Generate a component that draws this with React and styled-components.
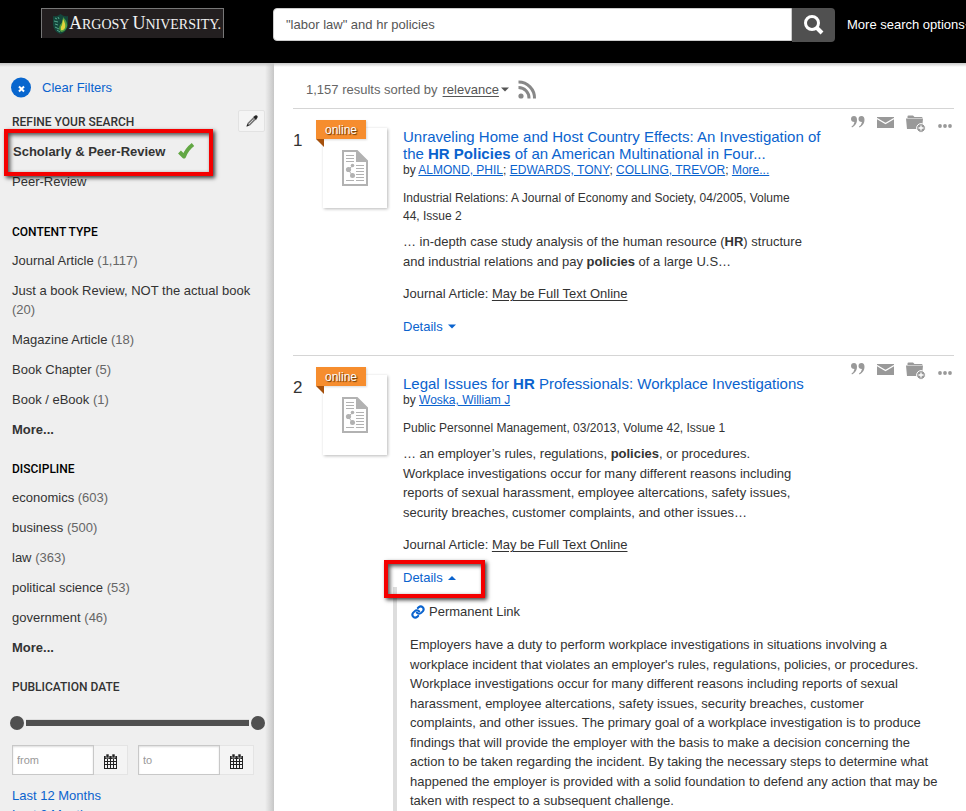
import React from 'react';
import styled, { createGlobalStyle, css } from 'styled-components';

const GlobalStyle = createGlobalStyle`
  * { box-sizing: border-box; }
  body {
    margin: 0;
    background: #fff;
    color: #333;
    font-family: "Liberation Sans", Arial, sans-serif;
    font-size: 13px;
    line-height: 19px;
  }
  button, input { font-family: inherit; }
  h1, h2, h3, p, ul, ol { margin: 0; padding: 0; font-weight: normal; }
  ul, ol { list-style: none; }
  svg { flex: none; }
`;

const BLUE = '#0a63ce';

const Page = styled.div`
  display: flex;
  flex-direction: column;
  height: 100vh;
  overflow: hidden;
`;

/* ---------- header ---------- */

const Header = styled.header`
  display: flex;
  align-items: flex-start;
  flex: none;
  padding: 8px 0 21px;
  background: #000;
  overflow: hidden;
`;

const LogoArea = styled.div`
  flex: none;
  width: 273px;
  padding-left: 41px;
`;

const Logo = styled.a`
  display: flex;
  align-items: center;
  width: 183px;
  height: 30px;
  padding-left: 10px;
  border: 1px solid #777;
  border-bottom: 0;
  background: #231f20;
  color: #f2f2f2;
  font: 14px/28px "Liberation Serif", "Times New Roman", serif;
  text-decoration: none;
  white-space: nowrap;
`;

const Initial = styled.span`
  font-size: 18px;
`;

const SearchForm = styled.form`
  display: flex;
  flex: 1;
  min-width: 0;
`;

const SearchInput = styled.input`
  flex: 1;
  min-width: 0;
  height: 33px;
  padding: 0 12px;
  border: 1px solid #ccc;
  border-radius: 4px 0 0 4px;
  background: #fff;
  color: #555;
  font-size: 13px;
`;

const SearchButton = styled.button`
  display: flex;
  align-items: center;
  justify-content: center;
  width: 43px;
  height: 34px;
  padding: 0;
  border: 0;
  border-radius: 0 4px 4px 0;
  background: #505050;
`;

const MoreOptions = styled.a`
  flex: none;
  width: 131px;
  padding-left: 12px;
  color: #fff;
  line-height: 33px;
  text-decoration: none;
  white-space: nowrap;
`;

/* ---------- sidebar ---------- */

const Columns = styled.div`
  display: flex;
  flex: 1;
  min-height: 0;
`;

const Sidebar = styled.aside`
  flex: none;
  width: 274px;
  padding: 14px 9px 0 12px;
  overflow: hidden;
  background:
    linear-gradient(to bottom, #c4c4c4, rgba(239, 239, 239, 0)) top / 100% 4px no-repeat,
    linear-gradient(to right, #efefef, #c6c6c6) right / 9px 100% no-repeat,
    #efefef;
`;

const ClearFilters = styled.button`
  display: flex;
  align-items: center;
  gap: 11px;
  height: 21px;
  margin: 0 0 15px -1px;
  padding: 0;
  border: 0;
  background: none;
  color: ${BLUE};
  font-size: 13px;
`;

const Facet = styled.section`
  margin-bottom: ${p => p.$gap || 21}px;
`;

const FacetHead = styled.div`
  display: flex;
  align-items: center;
  justify-content: space-between;
  height: 19px;
  margin-bottom: 9px;
`;

const FacetTitle = styled.h2`
  color: ${p => (p.$strong ? '#000' : '#333')};
  font: 500 12px/19px Roboto, "Liberation Sans", sans-serif;
`;

const EditButton = styled.button`
  display: flex;
  align-items: center;
  justify-content: center;
  width: 27px;
  height: 22px;
  margin-bottom: 3px;
  padding: 0;
  border: 1px solid #e2e2e2;
  border-radius: 2px;
  background: #f4f4f4;
`;

const FacetList = styled.ul`
  display: flex;
  flex-direction: column;
  gap: 11px;
`;

const FacetLink = styled.a`
  color: ${p => (p.$blue ? BLUE : '#333')};
  font-weight: ${p => (p.$bold ? 'bold' : 'normal')};
  text-decoration: none;
`;

const Count = styled.span`
  color: #666;
`;

const ActiveFacet = styled.li`
  position: relative;
  display: flex;
  align-items: center;
  gap: 12px;
  height: 20px;
  padding-left: 1px;
`;

/* Red annotation frame lying over the text it points out. */
const Callout = styled.span`
  position: absolute;
  inset: ${p => p.$inset};
  border: 4px solid #f40000;
  box-shadow: 2px 2px 4px rgba(0, 0, 0, 0.75), inset 2px 2px 4px rgba(0, 0, 0, 0.7);
  pointer-events: none;
`;

const Slider = styled.div`
  display: grid;
  align-items: center;
  height: 16px;
  margin: 18px 0 14px -2px;
`;

const SliderBar = styled.div`
  grid-area: 1 / 1;
  height: 6px;
  margin: 0 16px;
  background: #505050;
  box-shadow: 0 -1px #ddd;
`;

const thumb = css`
  appearance: none;
  width: 14px;
  height: 14px;
  border: 0;
  border-radius: 50%;
  background: #505050;
  box-shadow: 0 0 0 2px #efefef;
  pointer-events: auto;
`;

const SliderInput = styled.input`
  grid-area: 1 / 1;
  appearance: none;
  width: 100%;
  height: 16px;
  margin: 0;
  background: none;
  pointer-events: none;
  &::-webkit-slider-thumb { ${thumb} }
  &::-moz-range-thumb { ${thumb} }
`;

const DateRow = styled.div`
  display: flex;
  gap: 10px;
  margin-bottom: 11px;
`;

const DateField = styled.div`
  display: flex;
`;

const DateInput = styled.input`
  width: 82px;
  height: 30px;
  padding: 0 4px;
  border: 1px solid #c8c8c8;
  background: #fff;
  box-shadow: inset 0 1px 2px #ddd;
  font-size: 11px;
  &::placeholder { color: #999; }
`;

const DateButton = styled.button`
  display: flex;
  align-items: center;
  justify-content: center;
  width: 34px;
  height: 30px;
  padding: 3px 0 0;
  border: 1px solid #e4e4e4;
  border-left: 0;
  background: #f4f4f4;
`;

/* ---------- results ---------- */

const Main = styled.main`
  flex: 1;
  min-width: 0;
  padding: 16px 12px 0 19px;
  overflow: hidden;
  background: linear-gradient(to bottom, #c8c8c8, #fff) top / 100% 4px no-repeat, #fff;
`;

const SortRow = styled.div`
  display: flex;
  align-items: center;
  height: 21px;
  margin-bottom: 8px;
  padding-left: 13px;
  color: #666;
`;

const SortButton = styled.button`
  display: flex;
  align-items: center;
  gap: 2px;
  margin: 0 9px 0 5px;
  padding: 0;
  border: 0;
  background: none;
  color: #555;
  font-size: 13px;
  line-height: 19px;
`;

const Underlined = styled.span`
  text-decoration: underline;
  text-underline-offset: 2px;
`;

const Result = styled.li`
  display: grid;
  grid-template-columns: 30px 64px minmax(0, 1fr) auto;
  padding-bottom: 19px;
  border-top: 1px solid #d5d5d5;
`;

const Rank = styled.span`
  padding: 22px 0 0;
  font-size: 17px;
  line-height: 20px;
`;

const Thumb = styled.div`
  position: relative;
  display: flex;
  align-items: center;
  justify-content: center;
  height: 80px;
  margin-top: 19px;
  background: #fff;
  box-shadow: 1px 1px 3px rgba(0, 0, 0, 0.28);
`;

const Badge = styled.span`
  position: absolute;
  left: -7px;
  top: -8px;
  width: 50px;
  height: 19px;
  background: #f68d2e;
  color: #fff;
  font-size: 12px;
  line-height: 20px;
  text-align: center;
  text-shadow: 1px 1px 1px #5a3000;
  box-shadow: 1px 1px 2px rgba(0, 0, 0, 0.15);
  &::after {
    content: "";
    position: absolute;
    left: 0;
    top: 19px;
    border-top: 8px solid #a5500c;
    border-left: 8px solid transparent;
  }
`;

const Body = styled.div`
  padding: 19px 0 0 16px;
  white-space: nowrap;
`;

const Title = styled.h3`
  font-size: 15px;
  line-height: 17px;
`;

const TitleLink = styled.a`
  color: ${BLUE};
  text-decoration: none;
`;

const Byline = styled.p`
  margin-bottom: 10px;
  font-size: 12px;
  line-height: 17px;
`;

const Author = styled.a`
  color: ${BLUE};
  text-decoration: underline;
`;

const Source = styled.p`
  margin-bottom: 7px;
  font-size: 12px;
  line-height: 18px;
`;

const Snippet = styled.p`
  margin-bottom: 13px;
  line-height: 1.5;
`;

const Access = styled.p`
  margin-bottom: 14px;
`;

const AccessLink = styled.a`
  color: #333;
  text-underline-offset: 2px;
`;

const DetailsButton = styled.button`
  position: relative;
  display: flex;
  align-items: center;
  gap: 5px;
  padding: 0;
  border: 0;
  background: none;
  color: ${BLUE};
  font-size: 13px;
  line-height: 19px;
`;

const Actions = styled.div`
  display: flex;
  align-items: flex-start;
  gap: 12px;
  padding: 6px 2px 0 0;
`;

const ActionButton = styled.button`
  display: flex;
  padding: 0;
  border: 0;
  background: none;
  color: #999;
`;

const Panel = styled.div`
  grid-column: 3 / 5;
  margin-left: 6px;
  padding: 15px 0 8px 13px;
  border-left: 4px solid #ddd;
  white-space: nowrap;
`;

const PermanentLink = styled.a`
  display: flex;
  align-items: center;
  gap: 4px;
  margin-bottom: 14px;
  padding-left: 1px;
  color: #333;
  text-decoration: none;
`;

const Abstract = styled.p`
  line-height: 1.5;
`;

/* ---------- icons ---------- */

const Emblem = () => (
  <svg width="17" height="22" viewBox="0 0 17 22" aria-hidden="true">
    <path d="M1 3Q5 4 8.500 1Q12 4 16 3V12Q15 19 8.500 21Q2 19 1 12Z" fill="#14463b" />
    <path d="M3 5l2 1M2 8l4 1M3 11l3 1M3 14l4 2M6 4l1 2M5 17l3 2" stroke="#55a78c" strokeWidth="1" fill="none" />
    <path d="M11 4Q16 9 15 14Q13 19 9 19Q6 16 8 12Q11 9 11 4Z" fill="#4c9b43" />
    <path d="M11 6Q14 11 13 15Q11 18 9 17Q8 14 10 12Z" fill="#e2d43c" />
  </svg>
);

const SearchIcon = () => (
  <svg width="22" height="22" viewBox="0 0 22 22" aria-hidden="true">
    <circle cx="9" cy="9" r="6.500" fill="none" stroke="#fff" strokeWidth="3" />
    <path d="M13 13l6 6" stroke="#fff" strokeWidth="4" />
  </svg>
);

const ClearIcon = () => (
  <svg width="20" height="21" viewBox="0 0 20 21" aria-hidden="true">
    <circle cx="10" cy="10.500" r="10" fill="#0866ce" />
    <path d="M8 9.500l5 5M13 9.500l-5 5" stroke="#fff" strokeWidth="2" />
  </svg>
);

const PencilIcon = () => (
  <svg width="12" height="12" viewBox="0 0 12 12" aria-hidden="true">
    <path d="M0.500 11.500L1.500 8L7 2.500L9.500 5L4 10.500Z" fill="#777" />
    <path d="M7 2L8 1.500Q10 -0.500 11.500 1Q12 2.500 10.500 4L10 5.200Z" fill="#222" />
    <path d="M0.500 11.500L1.300 9L3 10.700Z" fill="#222" />
    <path d="M3 9L7.500 4.500" stroke="#ccc" />
  </svg>
);

const CheckIcon = () => (
  <svg width="19" height="18" viewBox="0 0 19 18" aria-hidden="true">
    <path d="M2.500 10L7 14.500Q10 7 16 2.500" fill="none" stroke="#62a744" strokeWidth="4" strokeLinejoin="round" />
  </svg>
);

const CalendarIcon = () => (
  <svg width="13" height="15" viewBox="0 0 13 15" aria-hidden="true">
    <path d="M0 2h13v13H0z" fill="#222" />
    <path d="M2 0h3v4H2zM8 0h3v4H8z" fill="#222" stroke="#f4f4f4" strokeWidth="0.600" />
    <path d="M1 5h2v2H1zM4 5h2v2H4zM7 5h2v2H7zM10 5h2v2h-2zM1 8h2v2H1zM4 8h2v2H4zM7 8h2v2H7zM10 8h2v2h-2zM1 11h2v3H1zM4 11h2v3H4zM7 11h2v3H7zM10 11h2v3h-2z" fill="#f4f4f4" />
  </svg>
);

const Caret = ({ up }) => (
  <svg width="8" height="5" viewBox="0 0 8 5" aria-hidden="true">
    <path d={up ? 'M0 5L4 1L8 5Z' : 'M0 0.500H8L4 4.500Z'} fill="currentColor" />
  </svg>
);

const RssIcon = () => (
  <svg width="19" height="19" viewBox="0 0 19 19" aria-label="RSS feed">
    <circle cx="3" cy="16" r="2.600" fill="#888" />
    <path d="M0.500 7.500A10.500 10.500 0 0 1 11 18.500M0.500 2A16 16 0 0 1 16.500 18.500" fill="none" stroke="#888" strokeWidth="3" />
  </svg>
);

const DocumentIcon = () => (
  <svg width="26" height="36" viewBox="0 0 26 36" aria-hidden="true">
    <path d="M1 1H15L25 11V35H1Z" fill="#fff" stroke="#b2b2b2" strokeWidth="2" />
    <path d="M14 0L26 12H14Z" fill="#b2b2b2" />
    <path d="M4 5.500h8M4 8.500h8M4 11.500h8M14 15.500h8M14 18.500h8M14 21.500h8M14 24.500h8M14 27.500h8M4 30.500h8M14 30.500h8" stroke="#b2b2b2" />
    <path d="M10.500 16L6 19.500L10.500 25.500" fill="none" stroke="#b2b2b2" />
    <circle cx="10.500" cy="15.500" r="1.800" fill="#b2b2b2" />
    <circle cx="6.500" cy="19.500" r="2.600" fill="#b2b2b2" />
    <circle cx="10.500" cy="25.500" r="2.500" fill="#b2b2b2" />
  </svg>
);

const QuoteIcon = () => (
  <svg width="14" height="18" viewBox="0 0 14 18" aria-hidden="true">
    <g fill="currentColor">
      <path d="M3 1Q6 1 6 5Q6 10 1 12.500L0.500 11.500Q3 10 3.500 7Q0 7 0 4Q0 1 3 1Z" />
      <path d="M10.500 1Q13.500 1 13.500 5Q13.500 10 8.500 12.500L8 11.500Q10.500 10 11 7Q7.500 7 7.500 4Q7.500 1 10.500 1Z" />
    </g>
  </svg>
);

const MailIcon = () => (
  <svg width="17" height="18" viewBox="0 0 17 18" aria-hidden="true">
    <path d="M0 2H17V13H0Z" fill="currentColor" />
    <path d="M0 3.500L8.500 8.500L17 3.500" fill="none" stroke="#fff" strokeWidth="1.300" />
  </svg>
);

const FolderIcon = () => (
  <svg width="20" height="18" viewBox="0 0 20 18" aria-hidden="true">
    <path d="M1.500 3V1.500Q1.500 0.500 2.500 0.500H7L8.500 2H15.500Q16.500 2 16.500 3Z" fill="currentColor" />
    <path d="M0 3.600H17L16 14H1Z" fill="currentColor" />
    <circle cx="15" cy="13" r="4.400" fill="currentColor" stroke="#fff" />
    <path d="M15 10.500V15.500M12.500 13H17.500" stroke="#fff" strokeWidth="1.300" />
  </svg>
);

const DotsIcon = () => (
  <svg width="14" height="18" viewBox="0 0 14 18" aria-hidden="true">
    <g fill="currentColor">
      <circle cx="2" cy="11" r="1.900" />
      <circle cx="7" cy="11" r="1.900" />
      <circle cx="12" cy="11" r="1.900" />
    </g>
  </svg>
);

const LinkIcon = () => (
  <svg width="14" height="14" viewBox="0 0 24 24" fill="none" stroke="#0a63ce" strokeWidth="3.600" strokeLinecap="round" aria-hidden="true">
    <path d="M10 13a5 5 0 0 0 7.500.5l3-3a5 5 0 0 0-7-7l-1.700 1.700" />
    <path d="M14 11a5 5 0 0 0-7.500-.5l-3 3a5 5 0 0 0 7 7l1.700-1.700" />
  </svg>
);

/* ---------- data ---------- */

const contentTypes = [
  ['Journal Article', '1,117'],
  ['Just a book Review, NOT the actual book', '20'],
  ['Magazine Article', '18'],
  ['Book Chapter', '5'],
  ['Book / eBook', '1'],
];

const disciplines = [
  ['economics', '603'],
  ['business', '500'],
  ['law', '363'],
  ['political science', '53'],
  ['government', '46'],
];

const results = [
  {
    title: <>Unraveling Home and Host Country Effects: An Investigation of<br />the <b>HR Policies</b> of an American Multinational in Four...</>,
    authors: ['ALMOND, PHIL', 'EDWARDS, TONY', 'COLLING, TREVOR', 'More...'],
    source: <>Industrial Relations: A Journal of Economy and Society, 04/2005, Volume<br />44, Issue 2</>,
    snippet: <>… in-depth case study analysis of the human resource (<b>HR</b>) structure<br />and industrial relations and pay <b>policies</b> of a large U.S…</>,
  },
  {
    title: <>Legal Issues for <b>HR</b> Professionals: Workplace Investigations</>,
    authors: ['Woska, William J'],
    source: 'Public Personnel Management, 03/2013, Volume 42, Issue 1',
    snippet: <>… an employer’s rules, regulations, <b>policies</b>, or procedures.<br />Workplace investigations occur for many different reasons including<br />reports of sexual harassment, employee altercations, safety issues,<br />security breaches, customer complaints, and other issues…</>,
    abstract: [
      'Employers have a duty to perform workplace investigations in situations involving a',
      "workplace incident that violates an employer's rules, regulations, policies, or procedures.",
      'Workplace investigations occur for many different reasons including reports of sexual',
      'harassment, employee altercations, safety issues, security breaches, customer',
      'complaints, and other issues. The primary goal of a workplace investigation is to produce',
      'findings that will provide the employer with the basis to make a decision concerning the',
      'action to be taken regarding the incident. By taking the necessary steps to determine what',
      'happened the employer is provided with a solid foundation to defend any action that may be',
      'taken with respect to a subsequent challenge.',
    ],
  },
];

const actions = [
  ['Cite', QuoteIcon],
  ['Email', MailIcon],
  ['Save to folder', FolderIcon],
  ['More actions', DotsIcon],
];

function FacetGroup({ title, items }) {
  return (
    <Facet>
      <FacetHead><FacetTitle $strong>{title}</FacetTitle></FacetHead>
      <FacetList>
        {items.map(([name, count]) => (
          <li key={name}><FacetLink href="#">{name} <Count>({count})</Count></FacetLink></li>
        ))}
        <li><FacetLink href="#" $bold>More...</FacetLink></li>
      </FacetList>
    </Facet>
  );
}

function DateBox({ label }) {
  return (
    <DateField>
      <DateInput type="text" placeholder={label} aria-label={`Date ${label}`} />
      <DateButton type="button" aria-label={`Pick date ${label}`}><CalendarIcon /></DateButton>
    </DateField>
  );
}

function ResultItem({ rank, item }) {
  const open = Boolean(item.abstract);
  return (
    <Result>
      <Rank>{rank}</Rank>
      <Thumb>
        <DocumentIcon />
        <Badge>online</Badge>
      </Thumb>
      <Body>
        <Title><TitleLink href="#">{item.title}</TitleLink></Title>
        <Byline>
          by {item.authors.map((name, i) => (
            <React.Fragment key={name}>{i > 0 && '; '}<Author href="#">{name}</Author></React.Fragment>
          ))}
        </Byline>
        <Source>{item.source}</Source>
        <Snippet>{item.snippet}</Snippet>
        <Access>Journal Article: <AccessLink href="#">May be Full Text Online</AccessLink></Access>
        <DetailsButton type="button" aria-expanded={open}>
          Details <Caret up={open} />
          {open && <Callout $inset="-8px -29px -11px -19px" />}
        </DetailsButton>
      </Body>
      <Actions>
        {actions.map(([label, Icon]) => (
          <ActionButton key={label} type="button" aria-label={label}><Icon /></ActionButton>
        ))}
      </Actions>
      {open && (
        <Panel>
          <PermanentLink href="#"><LinkIcon />Permanent Link</PermanentLink>
          <Abstract>
            {item.abstract.map(line => <React.Fragment key={line}>{line}<br /></React.Fragment>)}
          </Abstract>
        </Panel>
      )}
    </Result>
  );
}

export default function App() {
  return (
    <Page>
      <GlobalStyle />
      <Header>
        <LogoArea>
          <Logo href="#">
            <Emblem />
            <span><Initial>A</Initial>RGOSY <Initial>U</Initial>NIVERSITY.</span>
          </Logo>
        </LogoArea>
        <SearchForm onSubmit={e => e.preventDefault()}>
          <SearchInput type="text" aria-label="Search" defaultValue={'"labor law" and hr policies'} />
          <SearchButton type="submit" aria-label="Search"><SearchIcon /></SearchButton>
        </SearchForm>
        <MoreOptions href="#">More search options<Caret /></MoreOptions>
      </Header>
      <Columns>
        <Sidebar>
          <ClearFilters type="button"><ClearIcon />Clear Filters</ClearFilters>
          <Facet $gap={32}>
            <FacetHead>
              <FacetTitle>REFINE YOUR SEARCH</FacetTitle>
              <EditButton type="button" aria-label="Edit filters"><PencilIcon /></EditButton>
            </FacetHead>
            <FacetList>
              <ActiveFacet>
                <FacetLink href="#" $bold>Scholarly &amp; Peer-Review</FacetLink>
                <CheckIcon />
                <Callout $inset="-12px 52px -15px -8px" />
              </ActiveFacet>
              <li><FacetLink href="#">Peer-Review</FacetLink></li>
            </FacetList>
          </Facet>
          <FacetGroup title="CONTENT TYPE" items={contentTypes} />
          <FacetGroup title="DISCIPLINE" items={disciplines} />
          <Facet>
            <FacetTitle>PUBLICATION DATE</FacetTitle>
            <Slider>
              <SliderBar />
              <SliderInput type="range" min="0" max="100" defaultValue="0" aria-label="Earliest date" />
              <SliderInput type="range" min="0" max="100" defaultValue="100" aria-label="Latest date" />
            </Slider>
            <DateRow>
              <DateBox label="from" />
              <DateBox label="to" />
            </DateRow>
            <ul>
              <li><FacetLink href="#" $blue>Last 12 Months</FacetLink></li>
              <li><FacetLink href="#" $blue>Last 3 Months</FacetLink></li>
            </ul>
          </Facet>
        </Sidebar>
        <Main>
          <SortRow>
            1,157 results sorted by
            <SortButton type="button"><Underlined>relevance</Underlined><Caret /></SortButton>
            <RssIcon />
          </SortRow>
          <ol>
            {results.map((item, i) => <ResultItem key={i} rank={i + 1} item={item} />)}
          </ol>
        </Main>
      </Columns>
    </Page>
  );
}
